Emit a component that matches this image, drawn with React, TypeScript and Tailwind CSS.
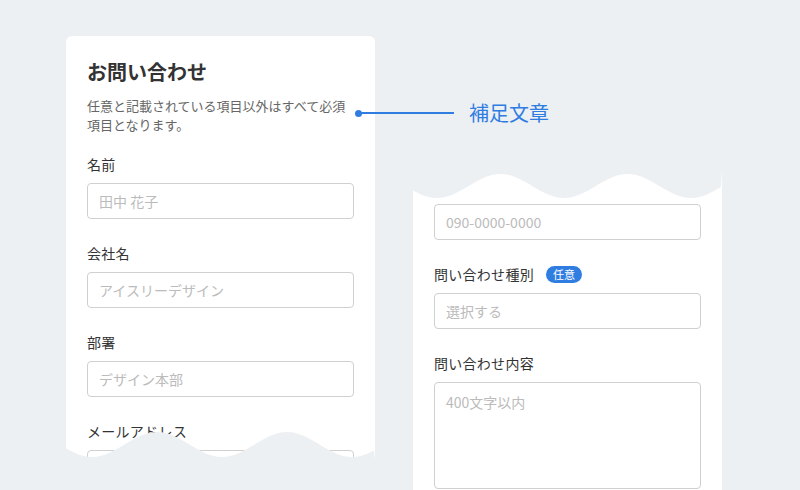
import type { ReactNode } from "react";

const font = { fontFamily: '"Noto Sans CJK JP", "Noto Sans", sans-serif' };

// sine-shaped edge, filled with page colour on one side
function wavePath(w: number, h: number, period: number, valleyX: number, mid: number, amp: number, fillTop: boolean) {
  const pts: string[] = [];
  for (let x = 0; x <= w; x += 2) {
    const y = mid + amp * Math.cos((2 * Math.PI * (x - valleyX)) / period);
    pts.push(`${x},${y.toFixed(2)}`);
  }
  const edge = fillTop ? `L${w},0 L0,0 Z` : `L${w},${h} L0,${h} Z`;
  return `M${pts.join(" L")} ${edge}`;
}

function Field({ label, placeholder, badge }: { label: string; placeholder: string; badge?: ReactNode }) {
  return (
    <div className="mb-6">
      <div className="mb-[9px] flex h-5 items-center gap-3 text-sm leading-5 text-[#333]">
        <span className="tracking-[0.02em]">{label}</span>
        {badge}
      </div>
      <div className="flex h-9 items-center rounded border border-[#d0d0d0] px-[11px] text-sm text-[#bbb]">
        {placeholder}
      </div>
    </div>
  );
}

export default function App() {
  return (
    <div className="relative h-[490px] w-[800px] overflow-hidden bg-[#edf0f3]" style={font}>
      <div className="flex items-start">
        {/* left card */}
        <div className="relative ml-[66px] mt-[36px] h-[424px] w-[309px] overflow-hidden rounded-t-md bg-white px-[21px] pt-[22px]">
          <h1 className="text-[20px] font-bold leading-7 text-[#333]">お問い合わせ</h1>
          <p className="mt-[10px] text-[13px] leading-[19px] text-[#666]">
            任意と記載されている項目以外はすべて必須項目となります。
          </p>
          <div className="mt-5">
            <Field label="名前" placeholder="田中 花子" />
            <Field label="会社名" placeholder="アイスリーデザイン" />
            <Field label="部署" placeholder="デザイン本部" />
            <Field label="メールアドレス" placeholder="" />
          </div>
          <svg className="absolute bottom-0 left-0" width="309" height="32" viewBox="0 0 309 32">
            <path d={wavePath(309, 32, 130, 26, 16.5, 12.5, false)} fill="#edf0f3" />
          </svg>
        </div>

        {/* right card */}
        <div className="relative ml-[38px] mt-[170px] h-[340px] w-[309px] bg-white px-[21px] pt-[34px]">
          <svg className="absolute left-0 top-0" width="309" height="30" viewBox="0 0 309 30">
            <path d={wavePath(309, 30, 127, 24, 16, 12, true)} fill="#edf0f3" />
          </svg>
          <div className="mb-6 flex h-9 items-center rounded border border-[#d0d0d0] px-[11px] text-sm text-[#bbb]">
            090-0000-0000
          </div>
          <Field
            label="問い合わせ種別"
            placeholder="選択する"
            badge={
              <span className="flex h-[17px] w-9 items-center justify-center rounded-full bg-[#2f7de1] text-[11px] leading-none text-white">
                任意
              </span>
            }
          />
          <div className="mb-[9px] h-5 text-sm leading-5 tracking-[0.02em] text-[#333]">問い合わせ内容</div>
          <div className="h-[107px] rounded border border-[#d0d0d0] px-[11px] pt-[9px] text-sm leading-5 text-[#bbb]">
            400文字以内
          </div>
        </div>
      </div>

      {/* annotation */}
      <div className="absolute left-[355px] top-[99px] flex items-center">
        <span className="h-[7px] w-[7px] rounded-full bg-[#2f7de1]" />
        <span className="-ml-[2px] h-[1.5px] w-[94px] bg-[#2f7de1]" />
        <span className="ml-[15px] text-[20px] leading-7 text-[#2f7de1]">補足文章</span>
      </div>
    </div>
  );
}
